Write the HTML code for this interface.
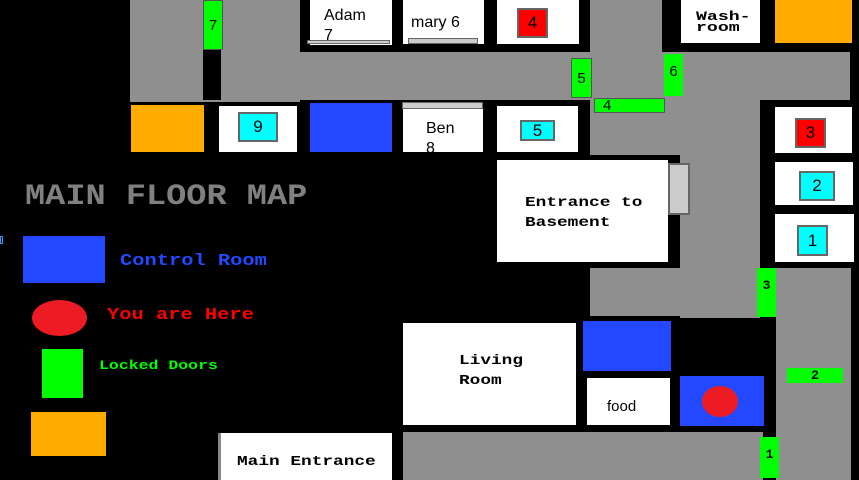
<!DOCTYPE html>
<html><head><style>
body{margin:0;width:859px;height:480px;background:#000;position:relative;overflow:hidden;font-family:"Liberation Sans",sans-serif}
div{position:absolute;box-sizing:border-box}
.g{background:#8f8f8f}
.w{background:#fff}
.gr{background:#00ff00;color:#000;font-size:15px;text-align:center}
.cy{background:#00ffff;border:2px solid #666;color:#000;text-align:center;font-size:17px}
.rd{background:#ff0000;border:2px solid #666;color:#000;text-align:center;font-size:17px}
.m{font-family:"Liberation Mono",monospace;font-weight:bold}
.s{display:inline-block;transform:scaleX(1.27);transform-origin:left;white-space:nowrap}
</style></head><body>
<!-- corridors -->
<div class="g" style="left:130px;top:0;width:170px;height:102px"></div>
<div class="g" style="left:130px;top:52px;width:720px;height:48px"></div>
<div class="g" style="left:590px;top:0;width:72px;height:155px"></div>
<div class="g" style="left:590px;top:100px;width:170px;height:55px"></div>
<div class="g" style="left:680px;top:100px;width:80px;height:218px"></div>
<div class="g" style="left:590px;top:268px;width:185px;height:48px"></div>
<div class="g" style="left:776px;top:268px;width:75px;height:212px"></div>
<div class="g" style="left:403px;top:432px;width:360px;height:48px"></div>
<div style="left:203px;top:50px;width:18px;height:50px;background:#000"></div>
<!-- doors -->
<div class="gr" style="left:203px;top:0;width:20px;height:50px;border:1px solid #555;line-height:50px">7</div>
<div class="gr" style="left:571px;top:58px;width:21px;height:40px;border:1px solid #555;line-height:40px">5</div>
<div class="gr" style="left:594px;top:98px;width:71px;height:15px;border:1px solid #555;line-height:13px;text-align:left;padding-left:8px">4</div>
<div class="gr" style="left:664px;top:54px;width:19px;height:42px;line-height:36px">6</div>
<div class="gr m" style="left:757px;top:268px;width:19px;height:49px;line-height:36px;font-size:13px">3</div>
<div class="gr m" style="left:787px;top:368px;width:56px;height:15px;line-height:15px;font-size:13px">2</div>
<div class="gr m" style="left:760px;top:437px;width:19px;height:41px;line-height:36px;font-size:13px">1</div>
<!-- top rooms -->
<div class="w" style="left:310px;top:0;width:82px;height:45px;font-size:16px;padding:6px 0 0 14px;line-height:20px">Adam<br>7</div>
<div style="left:307px;top:40px;width:83px;height:4px;background:#ccc;border:1px solid #666"></div>
<div class="w" style="left:403px;top:0;width:81px;height:44px;font-size:16px;padding:14px 0 0 8px">mary 6</div>
<div style="left:408px;top:38px;width:70px;height:6px;background:#ccc;border:1px solid #666"></div>
<div class="w" style="left:497px;top:0;width:82px;height:44px"></div>
<div class="rd" style="left:517px;top:8px;width:31px;height:30px;line-height:26px">4</div>
<div class="w m" style="left:681px;top:0;width:79px;height:43px;font-size:13px;line-height:11px;padding:11px 0 0 15px"><span class="s" style="transform:scaleX(1.4)">Wash-<br>room</span></div>
<div style="left:775px;top:0;width:77px;height:43px;background:#ffab00"></div>
<!-- second row -->
<div style="left:131px;top:105px;width:73px;height:47px;background:#ffab00"></div>
<div class="w" style="left:219px;top:106px;width:78px;height:46px"></div>
<div class="cy" style="left:238px;top:112px;width:40px;height:30px;line-height:26px">9</div>
<div style="left:310px;top:103px;width:82px;height:49px;background:#2448ff"></div>
<div class="w" style="left:403px;top:103px;width:80px;height:49px;font-size:16px;padding:16px 0 0 23px;line-height:20px;overflow:hidden">Ben<br>8</div>
<div style="left:402px;top:102px;width:81px;height:7px;background:#ccc;border:1px solid #666"></div>
<div class="w" style="left:497px;top:106px;width:81px;height:46px"></div>
<div class="cy" style="left:520px;top:120px;width:35px;height:21px;line-height:18px">5</div>
<!-- right rooms -->
<div class="w" style="left:775px;top:107px;width:77px;height:46px"></div>
<div class="rd" style="left:795px;top:118px;width:31px;height:30px;line-height:26px">3</div>
<div class="w" style="left:775px;top:162px;width:78px;height:43px"></div>
<div class="cy" style="left:799px;top:171px;width:36px;height:30px;line-height:26px">2</div>
<div class="w" style="left:775px;top:214px;width:79px;height:48px"></div>
<div class="cy" style="left:797px;top:225px;width:31px;height:31px;line-height:27px">1</div>
<!-- basement -->
<div class="w m" style="left:497px;top:160px;width:171px;height:102px;font-size:14px;line-height:20px;padding:33px 0 0 28px"><span class="s">Entrance to<br>Basement</span></div>
<div style="left:668px;top:163px;width:22px;height:52px;background:#ccc;border:2px solid #666"></div>
<!-- lower -->
<div class="w m" style="left:403px;top:323px;width:173px;height:102px;font-size:14px;line-height:20px;padding:28px 0 0 56px"><span class="s">Living<br>Room</span></div>
<div style="left:583px;top:321px;width:88px;height:50px;background:#2448ff"></div>
<div class="w" style="left:587px;top:378px;width:83px;height:47px;font-size:15px;padding:20px 0 0 20px">food</div>
<div style="left:680px;top:376px;width:84px;height:50px;background:#2448ff"></div>
<div style="left:702px;top:386px;width:36px;height:31px;border-radius:50%;background:#ed1c24"></div>
<div class="w m" style="left:218px;top:433px;width:174px;height:47px;font-size:14px;padding:21px 0 0 16px;border-left:3px solid #888"><span class="s">Main Entrance</span></div>
<!-- legend -->
<div class="m" style="left:25px;top:180px;font-size:30px;color:#808080"><span class="s" style="transform:scaleX(1.12)">MAIN FLOOR MAP</span></div>
<div style="left:23px;top:236px;width:82px;height:47px;background:#2448ff"></div>
<div class="m" style="left:120px;top:252px;font-size:17px;color:#2448ff"><span class="s" style="transform:scaleX(1.2)">Control Room</span></div>
<div style="left:32px;top:300px;width:55px;height:36px;border-radius:50%;background:#ed1c24"></div>
<div class="m" style="left:107px;top:306px;font-size:17px;color:#ff0000"><span class="s" style="transform:scaleX(1.2)">You are Here</span></div>
<div style="left:42px;top:349px;width:41px;height:49px;background:#00ff00"></div>
<div class="m" style="left:99px;top:358px;font-size:13px;color:#00ff00"><span class="s">Locked Doors</span></div>
<div style="left:31px;top:412px;width:75px;height:44px;background:#ffab00"></div>
<div style="left:0;top:236px;width:3px;height:8px;border:1px solid #39f"></div>
</body></html>
